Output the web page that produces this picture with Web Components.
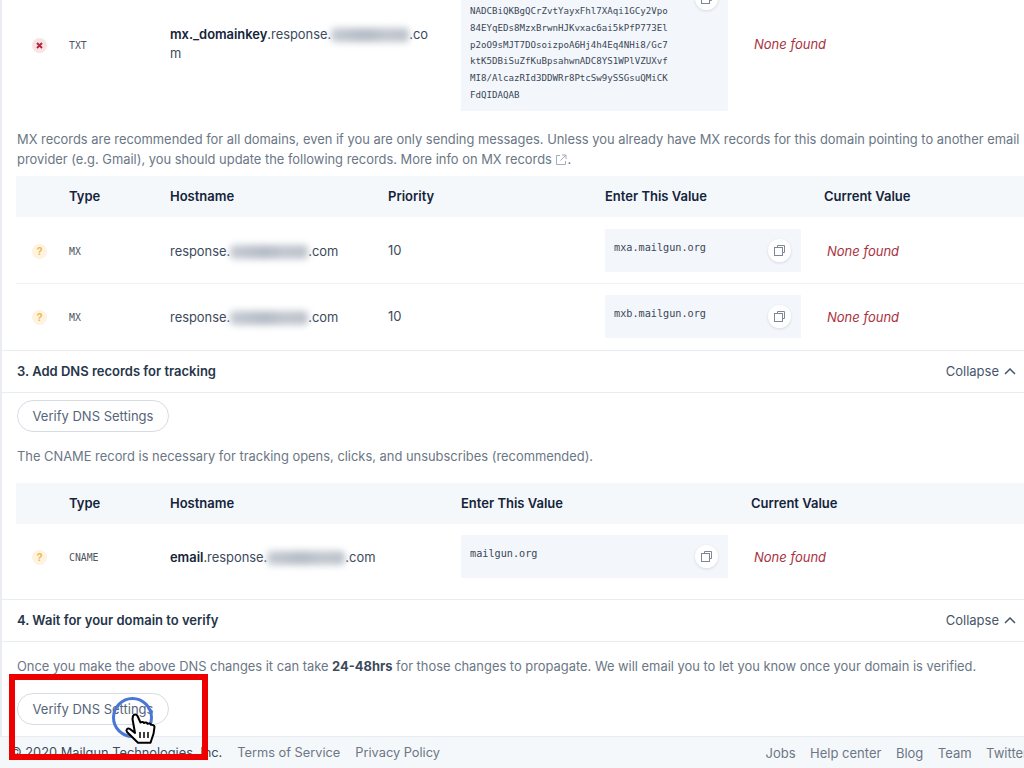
<!DOCTYPE html>
<html lang="en">
<head>
<meta charset="UTF-8">
<title>Domain verification</title>
<style>
  html, body { margin: 0; background: #fff; overflow: hidden; }
  body { font-family: Inter, "Noto Sans", sans-serif; font-size: 13px; color: #3c4a5c; }
</style>
</head>
<body>

<dns-page>
  <div style="--cols: 53px 101px 291px 290px 1fr; --code-size: 9.15px; --host-top: 0; margin-left: 16px">
    <dns-row status="error" type="TXT" current="None found" last style="padding-bottom: 7px">
      <b>mx._domainkey</b>.response.<blur-text></blur-text>.com
      <span slot="value" style="display:block;padding-top:15px">NADCBiQKBgQCrZvtYayxFhl7XAqi1GCy2Vpo
84EYqEDs8MzxBrwnHJKvxac6ai5kPfP773El
p2oO9sMJT7DOsoizpoA6Hj4h4Eq4NHi8/Gc7
ktK5DBiSuZfKuBpsahwnADC8YS1WPlVZUXvf
MI8/AlcazRId3DDWRr8PtcSw9ySSGsuQMiCK
FdQIDAQAB</span>
    </dns-row>
  </div>

  <help-text style="margin-top: 12px; margin-bottom: 6px">MX records are recommended for all domains, even if you are only sending messages. Unless you already have MX records for this domain pointing to another email provider (e.g. Gmail), you should update the following records. More info on MX records <svg width="12" height="12" viewBox="0 0 12 12" fill="none" stroke="#a3adb8" stroke-width="1" style="vertical-align:-2px"><path d="M5 1.500H1.500v9h9V7M7 1h4v4M11 1L5.500 6.500"/></svg>.</help-text>

  <div style="--cols: 53px 101px 218px 217px 219px 1fr; margin-left: 16px">
    <dns-head labels="Type|Hostname|Priority|Enter This Value|Current Value"></dns-head>
    <dns-row status="warn" type="MX" priority="10" current="None found">
      response.<blur-text></blur-text>.com
      <span slot="value">mxa.mailgun.org</span>
    </dns-row>
    <dns-row status="warn" type="MX" priority="10" current="None found" last style="padding-top: 11px; padding-bottom: 12px">
      response.<blur-text></blur-text>.com
      <span slot="value">mxb.mailgun.org</span>
    </dns-row>
  </div>

  <dns-section title="3. Add DNS records for tracking">
    <dns-button style="margin-top: 7px">Verify DNS Settings</dns-button>
    <help-text style="margin-top: 15px; margin-bottom: 16px">The CNAME record is necessary for tracking opens, clicks, and unsubscribes (recommended).</help-text>
    <div style="--cols: 53px 101px 291px 290px 1fr; margin-left: 16px">
      <dns-head labels="Type|Hostname|Enter This Value|Current Value"></dns-head>
      <dns-row status="warn" type="CNAME" current="None found" last style="padding-top: 11px; padding-bottom: 21px">
        <b>email</b>.response.<blur-text></blur-text>.com
        <span slot="value">mailgun.org</span>
      </dns-row>
    </div>
  </dns-section>

  <dns-section title="4. Wait for your domain to verify">
    <help-text style="margin-top: 15px; margin-bottom: 16px">Once you make the above DNS changes it can take <b>24-48hrs</b> for those changes to propagate. We will email you to let you know once your domain is verified.</help-text>
    <dns-button>Verify DNS Settings</dns-button>
  </dns-section>

  <site-footer slot="footer"></site-footer>
  <click-mark slot="mark"></click-mark>
</dns-page>

<script>
  class StatusIcon extends HTMLElement {
    constructor() {
      super();
      this.attachShadow({ mode: 'open' });
      const bad = this.getAttribute('kind') === 'error';
      this.shadowRoot.innerHTML = `
        <style>
          :host { display: flex; width: 15px; height: 15px; border-radius: 50%; align-items: center; justify-content: center;
                  background: ${bad ? '#f8e3e5' : '#fdf3de'}; color: ${bad ? '#b3263b' : '#f0b44c'};
                  font: 700 10px "Liberation Sans", sans-serif; }
          svg { display: block; }
        </style>
        ${bad
          ? '<svg width="7" height="7" viewBox="0 0 7 7"><path d="M1 1l5 5M6 1l-5 5" stroke="currentColor" stroke-width="1.9"/></svg>'
          : '<span>?</span>'}`;
    }
  }
  customElements.define('status-icon', StatusIcon);

  class CopyButton extends HTMLElement {
    constructor() {
      super();
      this.attachShadow({ mode: 'open' });
      this.shadowRoot.innerHTML = `
        <style>
          :host { display: flex; width: 23px; height: 23px; border-radius: 50%; background: #fff; align-items: center; justify-content: center;
                  box-shadow: 0 1px 3px rgba(40, 60, 90, .14); }
        </style>
        <svg width="11" height="11" viewBox="0 0 11 11" fill="none" stroke="#7c8896" stroke-width="1">
          <path d="M3.5 2.5V.5h7v7h-2"/><rect x=".5" y="2.5" width="8" height="8"/>
        </svg>`;
    }
  }
  customElements.define('copy-button', CopyButton);

  class CodeValue extends HTMLElement {
    constructor() {
      super();
      this.attachShadow({ mode: 'open' });
      this.shadowRoot.innerHTML = `
        <style>
          :host { display: block; position: relative; box-sizing: border-box; background: #f3f6fa; min-height: 43px;
                  padding: 11px 9px 7px 9px; color: #3a4757;
                  font: var(--code-size, 10.2px)/16.8px "DejaVu Sans Mono", monospace; }
          .text { white-space: pre-line; }
          copy-button { position: absolute; right: 10px; top: 10px; }
        </style>
        <div class="text"><slot></slot></div><copy-button></copy-button>`;
    }
  }
  customElements.define('code-value', CodeValue);

  class BlurText extends HTMLElement {
    constructor() {
      super();
      this.attachShadow({ mode: 'open' });
      this.shadowRoot.innerHTML = `
        <style>
          :host { display: inline-block; width: 78px; height: 14px; vertical-align: -3px; border-radius: 4px;
                  background: linear-gradient(90deg, #c6cbd3, #b4bbc5 45%, #c2c7cf 70%, #bcc2cb); filter: blur(3.5px); }
        </style>`;
    }
  }
  customElements.define('blur-text', BlurText);

  class DnsRow extends HTMLElement {
    constructor() {
      super();
      this.attachShadow({ mode: 'open' });
      const priority = this.getAttribute('priority');
      this.shadowRoot.innerHTML = `
        <style>
          :host { display: grid; grid-template-columns: var(--cols); align-items: center; padding: 12px 0 11px;
                  border-bottom: 1px solid #eef1f5; }
          :host([last]) { border-bottom: 0; }
          .icon { padding: 3px 0 0 16px; }
          .type { padding-top: 3px; font: 9.8px "DejaVu Sans Mono", monospace; color: #4c5560; }
          .host { word-break: break-all; line-height: 19px; padding: var(--host-top, 2px) 22px 0 0; color: #3c4a5c; font-size: 12.9px; }
          ::slotted(b) { font-weight: 600; color: #14243a; }
          .val { min-width: 0; padding-right: 23px; }
          .cur { padding: 1px 0 0 3px; font-style: italic; color: #a93240; }
        </style>
        <div class="icon"><status-icon kind="${this.getAttribute('status')}"></status-icon></div>
        <div class="type">${this.getAttribute('type')}</div>
        <div class="host"><slot></slot></div>
        ${priority ? `<div>${priority}</div>` : ''}
        <div class="val"><code-value><slot name="value"></slot></code-value></div>
        <div class="cur">${this.getAttribute('current')}</div>`;
    }
  }
  customElements.define('dns-row', DnsRow);

  class DnsHead extends HTMLElement {
    constructor() {
      super();
      this.attachShadow({ mode: 'open' });
      const cells = this.getAttribute('labels').split('|').map(t => `<div>${t}</div>`).join('');
      this.shadowRoot.innerHTML = `
        <style>
          :host { display: grid; grid-template-columns: var(--cols); align-items: center; height: 41px; background: #f5f8fb;
                  font-weight: 600; color: #14243a; }
        </style>
        <div></div>${cells}`;
    }
  }
  customElements.define('dns-head', DnsHead);

  class DnsSection extends HTMLElement {
    constructor() {
      super();
      this.attachShadow({ mode: 'open' });
      this.shadowRoot.innerHTML = `
        <style>
          :host { display: block; }
          header { display: flex; justify-content: space-between; align-items: center; box-sizing: border-box;
                   padding: 0 8px 0 17px; border-top: 1px solid #e9edf2; border-bottom: 1px solid #e9edf2; height: 43px; }
          h3 { margin: 0; font-size: 13px; font-weight: 600; color: #26364a; }
          .toggle { display: flex; align-items: center; gap: 5px; color: #47566a; }
        </style>
        <header>
          <h3>${this.getAttribute('title')}</h3>
          <div class="toggle">Collapse
            <svg width="12" height="7" viewBox="0 0 12 7" fill="none" stroke="#47566a" stroke-width="1.5"><path d="M1 6l5-5 5 5"/></svg>
          </div>
        </header>
        <slot></slot>`;
      this.removeAttribute('title');
    }
  }
  customElements.define('dns-section', DnsSection);

  class DnsButton extends HTMLElement {
    constructor() {
      super();
      this.attachShadow({ mode: 'open' });
      this.shadowRoot.innerHTML = `
        <style>
          :host { display: flex; align-items: center; justify-content: center; box-sizing: border-box; width: 152px; height: 32px;
                  margin-left: 17px; border: 1px solid #d6dce3; border-radius: 16px; color: #56657a; background: #fff; }
        </style>
        <slot></slot>`;
    }
  }
  customElements.define('dns-button', DnsButton);

  class HelpText extends HTMLElement {
    constructor() {
      super();
      this.attachShadow({ mode: 'open' });
      this.shadowRoot.innerHTML = `
        <style>
          :host { display: block; padding: 0 0 0 17px; line-height: 20px; color: #6b7785; font-size: 12.9px; }
          ::slotted(b) { color: #3c4a5c; font-weight: 700; }
        </style>
        <slot></slot>`;
    }
  }
  customElements.define('help-text', HelpText);

  class SiteFooter extends HTMLElement {
    constructor() {
      super();
      this.attachShadow({ mode: 'open' });
      this.shadowRoot.innerHTML = `
        <style>
          :host { display: flex; justify-content: space-between; align-items: center; box-sizing: border-box; width: 1040px; height: 32px;
                  padding: 0 12px 0 10px; background: #f5f8fb; border-top: 1px solid #e9edf2; color: #6b7785; font-size: 12.8px; }
          nav { display: flex; gap: 15px; }
          nav + nav { font-size: 13px; gap: 14.5px; }
          .copy { color: #3c4a5c; }
        </style>
        <nav><span class="copy">© 2020 Mailgun Technologies, Inc.</span><span>Terms of Service</span><span>Privacy Policy</span></nav>
        <nav><span>Jobs</span><span>Help center</span><span>Blog</span><span>Team</span><span>Twitter</span></nav>`;
    }
  }
  customElements.define('site-footer', SiteFooter);

  class ClickMark extends HTMLElement {
    constructor() {
      super();
      this.attachShadow({ mode: 'open' });
      this.shadowRoot.innerHTML = `
        <style>
          :host { display: block; position: absolute; left: 9px; top: 674px; width: 199px; height: 86px; box-sizing: border-box;
                  border: 6px solid #ee0000; pointer-events: none; }
          svg { position: absolute; left: 97px; top: 17px; overflow: visible; }
        </style>
        <svg width="42" height="42" viewBox="0 0 42 42">
          <circle cx="20.5" cy="20.500" r="19" fill="none" stroke="#4a76d6" stroke-width="3"/>
          <path transform="translate(14 16)" fill="#fff" stroke="#000" stroke-width="2" stroke-linejoin="round"
            d="M7 3c1-2 3.500-2 4.500 0l3 6.500c1.500-1 3-.5 3.500.5c1.500-1 3-.5 3.500.8c1.500-.8 3-.3 3.500 1c1-.3 3.500.5 3.500 2l-1 7l-3 9H12L1 19c-1.500-2 .5-4.500 3-3l5 4L6.500 6z"/>
          <path transform="translate(14 16)" stroke="#000" stroke-width="1.500" d="M14 19v6M18 19v6M22 19v6"/>
        </svg>`;
    }
  }
  customElements.define('click-mark', ClickMark);

  class DnsPage extends HTMLElement {
    constructor() {
      super();
      this.attachShadow({ mode: 'open' });
      this.shadowRoot.innerHTML = `
        <style>
          :host { display: flex; flex-direction: column; position: relative; width: 1024px; height: 768px; overflow: hidden; }
          .content { height: 736px; flex: none; overflow: hidden; border-left: 2px solid #e9edf2; box-sizing: border-box; }
          .inner { margin: -35px 0 0 -2px; }
        </style>
        <div class="content"><div class="inner"><slot></slot></div></div>
        <slot name="footer"></slot>
        <slot name="mark"></slot>`;
    }
  }
  customElements.define('dns-page', DnsPage);
</script>

</body>
</html>
